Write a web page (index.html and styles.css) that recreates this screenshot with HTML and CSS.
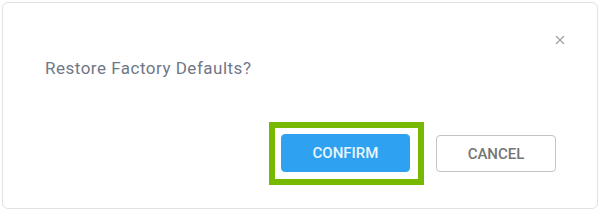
FILE: index.html
```html
<!DOCTYPE html>
<html lang="en">
<head>
    <meta charset="UTF-8">
    <meta name="viewport" content="width=device-width, initial-scale=1.0">
    <title>Restore Factory Defaults</title>
    <link rel="stylesheet" href="styles.css">
</head>
<body>
    <div class="dialog">
        <div class="dialog-header">
            <button class="close" aria-label="Close">
                <svg width="10" height="10" viewBox="0 0 10 10">
                    <path d="M1 1 L9 9 M9 1 L1 9" stroke="#a3a3a3" stroke-width="1.3" fill="none"/>
                </svg>
            </button>
        </div>

        <div class="message">Restore Factory Defaults?</div>

        <div class="actions">
            <div class="highlight">
                <button class="btn btn-primary">CONFIRM</button>
            </div>
            <button class="btn btn-default">CANCEL</button>
        </div>
    </div>
</body>
</html>
```

FILE: styles.css
```css
body {
    margin: 0;
    padding: 0;
    background: #fff;
    font-family: Roboto, "Liberation Sans", Arial, sans-serif;
}

.dialog {
    box-sizing: border-box;
    width: 596px;
    height: 207px;
    margin: 2px;
    border: 1px solid #e2e2e2;
    border-radius: 6px;
    background: #fff;
    padding: 27px 41px 0 42px;
    display: flex;
    flex-direction: column;
}

.dialog-header {
    display: flex;
    justify-content: flex-end;
    height: 20px;
    margin-right: -9px;
}

.close {
    border: 0;
    background: none;
    padding: 0;
    width: 10px;
    height: 20px;
    display: flex;
    align-items: center;
    cursor: pointer;
}

.message {
    margin-top: 8px;
    font-size: 17px;
    letter-spacing: 0.5px;
    line-height: 20px;
    color: #6f7787;
}

.actions {
    margin-top: 44px;
    display: flex;
    justify-content: flex-end;
    align-items: center;
    gap: 12px;
}

.highlight {
    border: 6px solid #76b900;
    padding: 6px 8px 7px 6px;
    display: flex;
}

.btn {
    box-sizing: border-box;
    font-family: Roboto, "Liberation Sans", Arial, sans-serif;
    font-size: 15px;
    font-weight: 500;
    border-radius: 4px;
    cursor: pointer;
}

.btn-primary {
    width: 129px;
    height: 38px;
    background: #2ea2f1;
    border: 1px solid #2ea2f1;
    color: #eaf5fd;
}

.btn-default {
    width: 120px;
    height: 37px;
    background: #fff;
    border: 1px solid #c4c4c4;
    color: #757575;
}
```
